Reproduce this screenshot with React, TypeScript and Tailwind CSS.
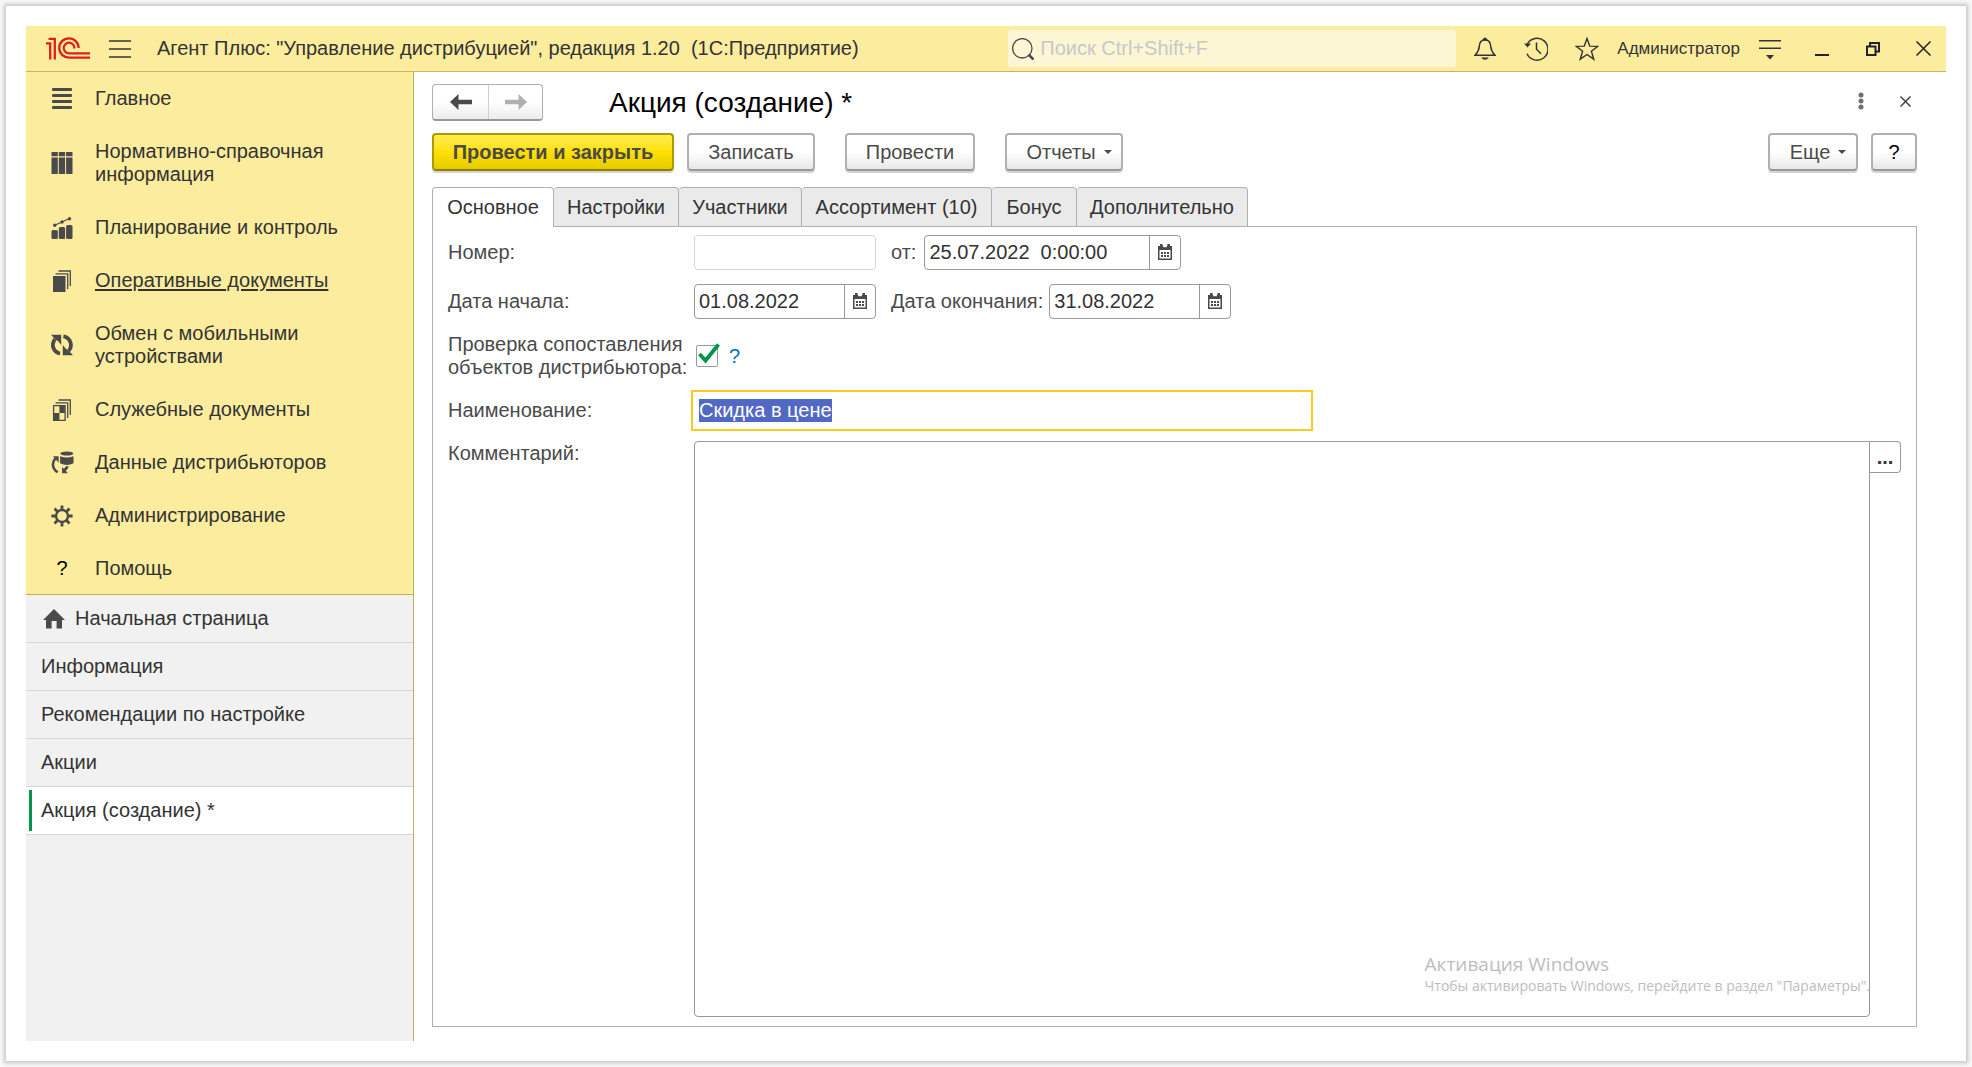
import React, { useEffect, useRef, useState } from "react";

type IconProps = { className?: string };

const Logo = () => (
  <svg viewBox="0 0 44 23" className="h-[23px] w-11" fill="none" stroke="#dd1f1c" aria-label="1C" role="img">
    <path d="M0 6.300H4.200V22.500M2.600 1.800H8.800V22.500" strokeWidth="2.300" />
    <path d="M32.600 11A9.700 9.700 0 1 0 23 20.700H44" strokeWidth="2.300" />
    <path d="M28.300 11.500A5.300 5.300 0 1 0 23 16.300H44" strokeWidth="2.200" />
  </svg>
);

const Lines = () => (
  <svg viewBox="0 0 22 22" className="size-[22px]" fill="#4a4a4a">
    <rect x="1" y="0" width="20" height="3" rx="1" />
    <rect x="1" y="6" width="20" height="3" rx="1" />
    <rect x="1" y="12" width="20" height="3" rx="1" />
    <rect x="1" y="18" width="20" height="3" rx="1" />
  </svg>
);

const Binders = () => (
  <svg viewBox="0 0 22 22" className="size-[22px]" fill="#4a4a4a">
    <path d="M.5 0h6.300v4.200H.5zM7.800 0h6.300v4.200H7.800zM15.100 0h6.400v4.200h-6.400zM.5 5.500h6.300V22H.5zM7.800 5.500h6.300V22H7.800zM15.100 5.500h6.400V22h-6.400z" />
  </svg>
);

const Chart = () => (
  <svg viewBox="0 0 22 22" className="size-[22px]" fill="#4a4a4a">
    <rect x=".5" y="13" width="6.300" height="9" rx="1.500" />
    <rect x="7.800" y="10" width="6.300" height="12" rx="1.500" />
    <rect x="15.100" y="8" width="6.400" height="14" rx="1.500" />
    <path d="M3.500 8.300L11 5l7.500-3.500" stroke="#4a4a4a" strokeWidth="1.200" fill="none" />
    <circle cx="3.700" cy="8.300" r="1.700" />
    <circle cx="11" cy="5" r="1.700" />
    <circle cx="18.500" cy="1.800" r="1.700" />
  </svg>
);

const Docs = () => (
  <svg viewBox="0 0 22 22" className="size-[22px]" fill="#4a4a4a">
    <rect x="2" y="6" width="12.500" height="16" />
    <path d="M4.500 3.800h12.200V19M7.500 1h11.800v15" stroke="#4a4a4a" strokeWidth="1.300" fill="none" />
  </svg>
);

const ServiceDocs = () => (
  <svg viewBox="0 0 22 22" className="size-[22px]" fill="#4a4a4a">
    <rect x="2.600" y="6.600" width="11.500" height="14.800" fill="none" stroke="#4a4a4a" strokeWidth="1.300" />
    <path d="M8.400 7h5.400v7H8.400zM2.600 14h5.800v7.400H2.600z" />
    <path d="M4.500 3.800h12.200V19M7.500 1h11.800v15" stroke="#4a4a4a" strokeWidth="1.300" fill="none" />
  </svg>
);

const Sync = () => (
  <svg viewBox="0 0 22 22" className="size-[22px]">
    <path d="M9 19.600A8.800 8.800 0 0 1 4.200 5" stroke="#4a4a4a" strokeWidth="3.800" fill="none" />
    <path d="M0 .8h10.200V11L7.400 7.400 2 3z" fill="#4a4a4a" />
    <path d="M12.400 2.400A8.800 8.800 0 0 1 17.600 17" stroke="#4a4a4a" strokeWidth="3.800" fill="none" />
    <path d="M22 21.200H11.800V11l2.800 3.600L20 19z" fill="#4a4a4a" />
  </svg>
);

const DataSync = () => (
  <svg viewBox="0 0 24 24" className="size-[23px]">
    <path d="M7 22.200Q1.800 19 2 13.500Q2.200 10 5 7.500" stroke="#4a4a4a" strokeWidth="2.600" fill="none" />
    <path d="M2 5.400h6v6.800L6 9.800z" fill="#4a4a4a" />
    <ellipse cx="16.500" cy="2.600" rx="6.800" ry="2.200" fill="#4a4a4a" />
    <path d="M9.500 5.400q7 2.600 14 0v7.300q-7 3.800-14 0z" fill="#4a4a4a" />
    <path d="M18.500 16q-.6 3-3 4.600l2 2.600h-6v-6.400l1.800 1.800q1.500-.8 2-2.600z" fill="#4a4a4a" />
  </svg>
);

const Gear = () => (
  <svg viewBox="0 0 22 22" className="size-[22px]" fill="none" stroke="#4a4a4a">
    <circle cx="11" cy="11" r="6" strokeWidth="2.400" />
    <path
      d="M11 .4v4M11 17.600v4M.4 11h4M17.600 11h4M3.500 3.500l2.900 2.900M15.600 15.600l2.900 2.900M3.500 18.500l2.900-2.900M15.600 6.400l2.900-2.900"
      strokeWidth="2.800"
    />
  </svg>
);

const Question = () => <span className="text-black">?</span>;

const Home = () => (
  <svg viewBox="0 0 22 20" className="h-5 w-[22px]" fill="#4a4a4a">
    <path d="M11 0L22 11h-3v8.500h-5.400V12H8.600v7.500H3V11H0z" />
  </svg>
);

const Calendar = () => (
  <svg viewBox="0 0 14 16" className="h-4 w-3.5" fill="#4a4a4a">
    <path fillRule="evenodd" d="M0 2h14v14H0zM1.500 6v8.500h11V6z" />
    <rect x="2" y="0" width="2.600" height="3" />
    <rect x="9.400" y="0" width="2.600" height="3" />
    <path d="M5.200 1.800h3.600v1.400H5.200z" fill="#fff" />
    <path d="M3 8h2v2H3zM6 8h2v2H6zM9 8h2v2H9zM3 11h2v2H3zM6 11h2v2H6zM9 11h2v2H9z" />
  </svg>
);

const Caret = () => (
  <svg viewBox="0 0 8 4" className="h-1 w-2" fill="#4a4a4a">
    <path d="M0 0h8L4 4z" />
  </svg>
);

const Arrow = ({ className }: IconProps) => (
  <svg viewBox="0 0 22 16" className={className} fill="currentColor">
    <path d="M0 8L8.500 0v5.800H22v4.400H8.500V16z" />
  </svg>
);

const sections = [
  { label: "Главное", Icon: Lines },
  { label: "Нормативно-справочная информация", Icon: Binders },
  { label: "Планирование и контроль", Icon: Chart },
  { label: "Оперативные документы", Icon: Docs, active: true },
  { label: "Обмен с мобильными устройствами", Icon: Sync },
  { label: "Служебные документы", Icon: ServiceDocs },
  { label: "Данные дистрибьюторов", Icon: DataSync },
  { label: "Администрирование", Icon: Gear },
  { label: "Помощь", Icon: Question },
];

const openPages = ["Информация", "Рекомендации по настройке", "Акции"];

const tabs = [
  { label: "Основное", width: "w-[122px]" },
  { label: "Настройки", width: "w-[125px]" },
  { label: "Участники", width: "w-[123px]" },
  { label: "Ассортимент (10)", width: "w-[190px]" },
  { label: "Бонус", width: "w-[85px]" },
  { label: "Дополнительно", width: "w-[171px]" },
];

const grayButton =
  "flex h-[38px] items-center justify-center rounded-[4px] border-2 border-[#b0b0b0] border-b-[#989898] bg-linear-to-b from-white from-50% to-[#e8e8e8] text-[#4a4a4a] shadow-[0_2px_0_#d4d4d4]";

function Header() {
  return (
    <header className="flex h-[46px] shrink-0 items-center border-b border-[#c6b65c] bg-[#fbec9e] pr-[15px] pl-5 text-[#333]">
      <Logo />
      <button type="button" aria-label="Меню" className="ml-[19px]">
        <svg viewBox="0 0 22 18" className="h-[18px] w-[22px]" stroke="#333" strokeWidth="1.500">
          <path d="M0 1h22M0 9h22M0 17h22" />
        </svg>
      </button>
      <h1 className="ml-[26px] flex-1 whitespace-pre">
        Агент Плюс: "Управление дистрибуцией", редакция 1.20  (1С:Предприятие)
      </h1>
      <label className="flex h-[37px] w-[448px] items-center gap-1.5 rounded-[3px] bg-[#fdf6d5] pl-1">
        <svg viewBox="0 0 22 22" className="size-[22px] shrink-0" fill="none" stroke="#4a4a4a">
          <circle cx="10.300" cy="10.300" r="9.700" strokeWidth="1.300" />
          <path d="M16.500 16.500l5 5" strokeWidth="2.600" />
        </svg>
        <input
          type="text"
          aria-label="Поиск"
          placeholder="Поиск Ctrl+Shift+F"
          className="min-w-0 flex-1 bg-transparent outline-none placeholder:text-[#c8c8c8]"
        />
      </label>
      <div className="ml-[18px] flex items-center">
        <button type="button" aria-label="Уведомления">
          <svg viewBox="0 0 22 24" className="h-6 w-[22px]" fill="none" stroke="#333" strokeWidth="1.500">
            <path d="M1 18.300h20c-2.500-2.600-4-5-4.200-8.600C16.600 5.500 14.500 3 11 3S5.400 5.500 5.200 9.700C5 13.300 3.500 15.700 1 18.300z" />
            <path d="M9.500 2.500Q11 0 12.500 2.500z" fill="#333" />
            <path d="M7 20.500h8q-4 4.500-8 0z" fill="#333" stroke="none" />
          </svg>
        </button>
        <button type="button" aria-label="История" className="ml-7">
          <svg viewBox="0 0 24 24" className="size-6" fill="none" stroke="#333" strokeWidth="1.500">
            <path d="M3.300 7A11 11 0 1 1 3 16.800M12.500 5.500v6.800l4.500 4.400" />
            <path d="M0 6.500h7L3.500 10.500z" fill="#333" stroke="none" />
          </svg>
        </button>
        <button type="button" aria-label="Избранное" className="ml-[27px]">
          <svg viewBox="0 0 24 24" className="size-6" fill="none" stroke="#333" strokeWidth="1.400">
            <path d="M12 1.500l2.700 7.600 8.200.2-6.500 4.900 2.400 8L12 17.500l-6.800 4.700 2.400-8-6.500-4.900 8.200-.2z" />
          </svg>
        </button>
        <a href="#user" className="ml-[18px] text-[17px]">
          Администратор
        </a>
        <button type="button" aria-label="Сервис" className="ml-[19px]">
          <svg viewBox="0 0 22 22" className="size-[22px]" fill="#333">
            <path d="M0 2h22v1.600H0zM0 9.500h22v1.600H0zM7 17h8l-4 4.500z" />
          </svg>
        </button>
        <button type="button" aria-label="Свернуть" className="ml-[34px]">
          <svg viewBox="0 0 14 14" className="size-3.5" fill="#222">
            <path d="M0 12h14v2H0z" />
          </svg>
        </button>
        <button type="button" aria-label="Развернуть" className="ml-[37px]">
          <svg viewBox="0 0 14 14" className="size-3.5" fill="none" stroke="#222" strokeWidth="2">
            <path d="M1 4.500h8.500V13H1zM4 4.500V1h9v8.500H9.500" />
          </svg>
        </button>
        <button type="button" aria-label="Закрыть" className="ml-9">
          <svg viewBox="0 0 15 15" className="size-[15px]" stroke="#222" strokeWidth="1.500">
            <path d="M.5.5l14 14M14.500.5l-14 14" />
          </svg>
        </button>
      </div>
    </header>
  );
}

function Sidebar() {
  return (
    <aside className="flex w-[388px] shrink-0 flex-col border-r border-[#bfb05a] bg-[#f1f1f1] text-[#333]">
      <nav aria-label="Разделы" className="bg-[#fbec9e] shadow-[inset_0_-1px_0_#c4b251]">
        {sections.map(({ label, Icon, active }) => (
          <a key={label} href="#section" className="flex items-center py-[15px] pl-5">
            <span className="flex h-[23px] w-8 shrink-0 items-center justify-center">
              <Icon />
            </span>
            <span className={active ? "ml-[17px] w-64 underline underline-offset-2" : "ml-[17px] w-64"}>{label}</span>
          </a>
        ))}
      </nav>
      <nav aria-label="Открытые окна">
        <a href="#home" className="flex h-12 items-center gap-2.5 border-b border-[#d6d6d6] pl-[17px]">
          <Home />
          Начальная страница
        </a>
        {openPages.map((page) => (
          <a key={page} href="#page" className="flex h-12 items-center border-b border-[#d6d6d6] pl-[15px]">
            {page}
          </a>
        ))}
        <a
          href="#current"
          aria-current="page"
          className="flex h-12 items-center border-b border-[#d6d6d6] bg-white pl-[3px]"
        >
          <span className="h-[41px] w-[3px] bg-[#009646]" />
          <span className="ml-[9px]">Акция (создание) *</span>
        </a>
      </nav>
    </aside>
  );
}

type DateFieldProps = { id: string; value: string; className: string };

function DateField({ id, value, className }: DateFieldProps) {
  return (
    <div className={className}>
      <input
        id={id}
        type="text"
        defaultValue={value}
        className="h-full min-w-0 flex-1 bg-transparent pl-1 text-[#333] outline-none"
      />
      <button
        type="button"
        aria-label="Выбрать дату"
        className="flex h-full w-[31px] items-center justify-center border-l border-[#999]"
      >
        <Calendar />
      </button>
    </div>
  );
}

function PromoForm() {
  const nameRef = useRef<HTMLInputElement>(null);
  const [checked, setChecked] = useState(true);

  useEffect(() => {
    nameRef.current?.focus();
    nameRef.current?.select();
  }, []);

  return (
    <section className="flex flex-1 flex-col border border-t-0 border-[#b0b0b0] pr-[15px] pb-[9px] pl-[15px] text-[#4a4a4a]">
      <div className="mt-[7px] flex h-9 items-center">
        <label htmlFor="number" className="w-[246px]">
          Номер:
        </label>
        <input
          id="number"
          type="text"
          className="h-[35px] w-[182px] rounded-[4px] border border-[#d4d4d4] px-1 outline-none"
        />
        <label htmlFor="date" className="mr-2 ml-[15px]">
          от:
        </label>
        <DateField
          id="date"
          value="25.07.2022  0:00:00"
          className="flex h-[35px] w-[257px] items-center rounded-[4px] border border-[#999]"
        />
      </div>

      <div className="mt-[13px] flex h-9 items-center">
        <label htmlFor="start" className="w-[246px]">
          Дата начала:
        </label>
        <DateField
          id="start"
          value="01.08.2022"
          className="flex h-[35px] w-[182px] items-center rounded-[4px] border border-[#999]"
        />
        <label htmlFor="end" className="mr-1.5 ml-[15px]">
          Дата окончания:
        </label>
        <DateField
          id="end"
          value="31.08.2022"
          className="flex h-[35px] w-[182px] items-center rounded-[4px] border border-[#999]"
        />
      </div>

      <div className="mt-[14px] flex items-center">
        <label htmlFor="check" className="w-[246px]">
          Проверка сопоставления объектов&nbsp;дистрибьютора:
        </label>
        <span className="relative ml-0.5 flex">
          <input
            id="check"
            type="checkbox"
            checked={checked}
            onChange={(e) => setChecked(e.target.checked)}
            className="size-[22px] appearance-none rounded-[2px] border border-[#999] bg-white"
          />
          {checked && (
            <svg
              viewBox="0 0 22 22"
              className="pointer-events-none absolute -top-0.5 left-0.5 size-[22px]"
              fill="none"
              stroke="#009646"
              strokeWidth="3.800"
            >
              <path d="M1.500 11l6 6.500L20.500 1.500" />
            </svg>
          )}
        </span>
        <button type="button" aria-label="Справка по полю" className="ml-[11px] text-[#0072bc]">
          ?
        </button>
      </div>

      <div className="mt-[11px] flex items-center">
        <label htmlFor="name" className="w-[243px]">
          Наименование:
        </label>
        <input
          ref={nameRef}
          id="name"
          type="text"
          defaultValue="Скидка в цене"
          className="h-[41px] w-[622px] border-2 border-[#fbcb1e] px-1.5 text-[#333] outline-none selection:bg-[#5168c4] selection:text-white"
        />
      </div>

      <div className="mt-2.5 flex flex-1">
        <label htmlFor="comment" className="w-[246px] shrink-0 pt-px">
          Комментарий:
        </label>
        <div className="relative flex min-w-0 flex-1">
          <textarea
            id="comment"
            className="min-w-0 flex-1 resize-none rounded-[4px] rounded-tr-none border border-[#999] p-1 outline-none"
          />
          <div className="pointer-events-none absolute right-0 bottom-[21px] font-['Open_Sans',sans-serif] whitespace-nowrap text-[#bdbdbd]">
            <p className="text-[19px] leading-6">Активация Windows</p>
            <p className="text-[14px] leading-5">Чтобы активировать Windows, перейдите в раздел "Параметры".</p>
          </div>
        </div>
        <button
          type="button"
          aria-label="Открыть редактор"
          className="flex h-8 w-[31px] shrink-0 items-center justify-center rounded-r-[4px] border border-l-0 border-[#999] font-bold text-[#333]"
        >
          ...
        </button>
      </div>
    </section>
  );
}

export default function App() {
  return (
    <div className="flex min-h-screen flex-col bg-[#f8f8f8] p-1.5 font-['Liberation_Sans',Arial,sans-serif] text-[20px] leading-[23px]">
      <div className="flex flex-1 flex-col bg-white p-5 shadow-[0_0_4px_2px_#c4c4c4]">
        <Header />
        <div className="flex flex-1">
          <Sidebar />
          <main className="flex min-w-0 flex-1 flex-col pt-3 pr-[29px] pb-[14px] pl-[18px]">
            <div className="flex h-[37px] items-center">
              <div className="flex h-[37px] w-[111px] rounded-[4px] border border-[#b0b0b0] border-b-2 border-b-[#999] bg-linear-to-b from-white from-50% to-[#ececec]">
                <button
                  type="button"
                  aria-label="Назад"
                  className="flex w-14 items-center justify-center border-r border-[#d0d0d0] text-[#4a4a4a]"
                >
                  <Arrow className="h-4 w-[22px]" />
                </button>
                <button
                  type="button"
                  aria-label="Вперед"
                  className="flex flex-1 items-center justify-center text-[#b0b0b0]"
                >
                  <Arrow className="h-4 w-[22px] rotate-180" />
                </button>
              </div>
              <h2 className="ml-[66px] flex-1 text-[28px] leading-8 text-black">Акция (создание) *</h2>
              <div className="mr-1.5 mb-[3px] flex items-center gap-9">
                <button type="button" aria-label="Еще действия">
                  <svg viewBox="0 0 6 18" className="h-[18px] w-1.5" fill="#707070">
                    <circle cx="3" cy="3" r="2.500" />
                    <circle cx="3" cy="9" r="2.500" />
                    <circle cx="3" cy="15" r="2.500" />
                  </svg>
                </button>
                <button type="button" aria-label="Закрыть форму">
                  <svg viewBox="0 0 11 11" className="size-[11px]" stroke="#444" strokeWidth="1.500">
                    <path d="M.5.5l10 10M10.500.5l-10 10" />
                  </svg>
                </button>
              </div>
            </div>

            <div className="mt-3 flex items-center">
              <button
                type="button"
                className="flex h-[38px] w-[242px] items-center justify-center rounded-[4px] border-2 border-[#ab9a00] border-b-[#8f8000] bg-linear-to-b from-[#ffec48] via-[#ffe000] to-[#e6cb00] font-bold text-[#4a4a4a] shadow-[0_2px_0_#d4d4d4]"
              >
                Провести и закрыть
              </button>
              <button type="button" className={`${grayButton} ml-[13px] w-32`}>
                Записать
              </button>
              <button type="button" className={`${grayButton} ml-[30px] w-[130px]`}>
                Провести
              </button>
              <button type="button" className={`${grayButton} ml-[30px] w-[118px] gap-2 pl-2.5`}>
                Отчеты
                <Caret />
              </button>
              <button type="button" className={`${grayButton} ml-auto w-[90px] gap-2 pl-2.5`}>
                Еще
                <Caret />
              </button>
              <button type="button" aria-label="Справка" className={`${grayButton} ml-[13px] w-[46px]`}>
                <span className="text-black">?</span>
              </button>
            </div>

            <div role="tablist" className="mt-4 flex h-10">
              {tabs.map(({ label, width }, i) => (
                <button
                  key={label}
                  type="button"
                  role="tab"
                  aria-selected={i === 0}
                  className={`${width} shrink-0 rounded-t-[4px] border border-[#b0b0b0] whitespace-nowrap text-[#333] ${
                    i === 0 ? "border-b-0 bg-white" : "border-l-0 bg-[#eaeaea]"
                  }`}
                >
                  {label}
                </button>
              ))}
              <div className="flex-1 border-b border-[#b0b0b0]" />
            </div>
            <PromoForm />
          </main>
        </div>
      </div>
    </div>
  );
}
